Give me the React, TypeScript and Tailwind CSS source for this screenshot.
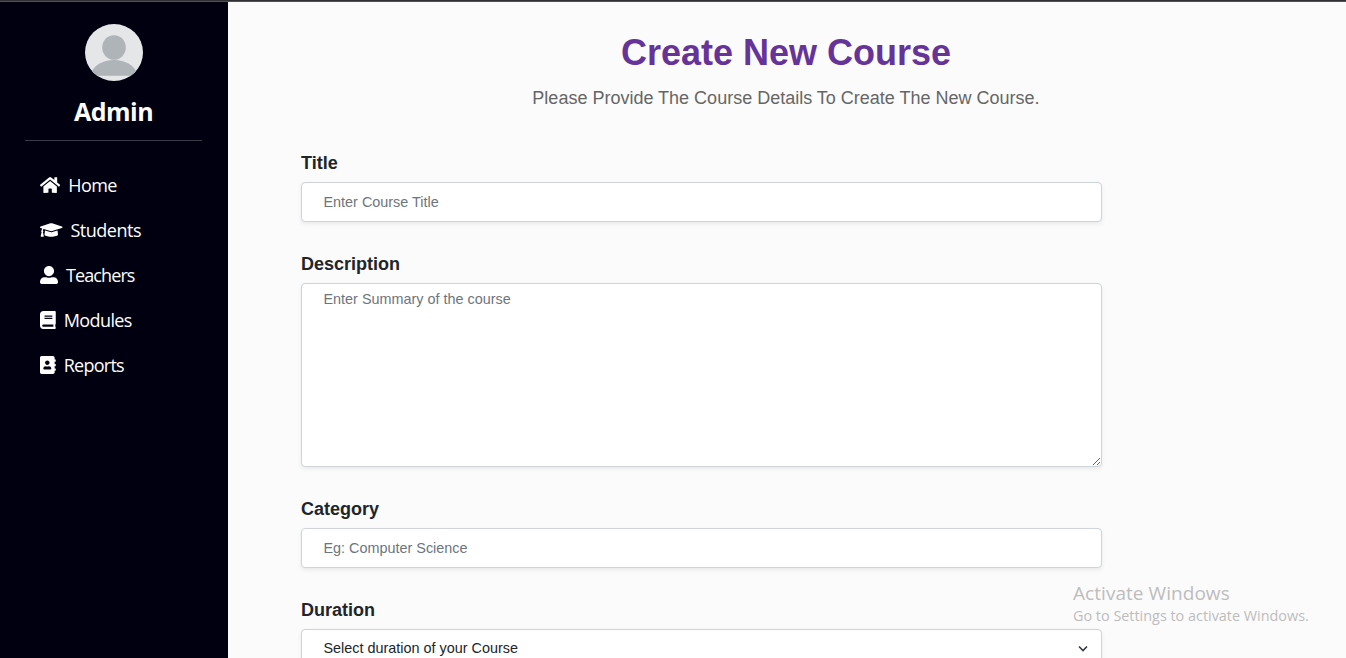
import type { ComponentType, ReactNode } from "react";
import { FaAddressBook, FaBook, FaGraduationCap, FaHome, FaUserAlt } from "react-icons/fa";

type NavItem = { label: string; icon: ComponentType<{ className?: string; preserveAspectRatio?: string }>; size: string; spacing: string };

const navItems: NavItem[] = [
  { label: "Home", icon: FaHome, size: "w-[20.25px]", spacing: "tracking-[-0.6px]" },
  { label: "Students", icon: FaGraduationCap, size: "w-[22.5px]", spacing: "tracking-[-0.5px]" },
  { label: "Teachers", icon: FaUserAlt, size: "w-[18px]", spacing: "tracking-[-0.9px]" },
  { label: "Modules", icon: FaBook, size: "w-[15.75px]", spacing: "tracking-[-0.6px]" },
  { label: "Reports", icon: FaAddressBook, size: "w-[15.75px]", spacing: "tracking-[-0.75px]" },
];

const control =
  "block w-full rounded-[4px] border border-[#ced4da] bg-white px-[21.5px] text-[14.4px] text-[#212529] shadow-[0_2px_4px_rgba(0,0,0,0.075)] outline-none placeholder:text-[#6c757d]";

function Avatar() {
  return (
    <svg className="h-[57px] w-[58px]" viewBox="0 0 58 57">
      <defs>
        <clipPath id="avatar">
          <ellipse cx="29" cy="28.5" rx="29" ry="28.5" />
        </clipPath>
      </defs>
      <g clipPath="url(#avatar)">
        <rect width="58" height="57" fill="#e4e6e8" />
        <ellipse cx="29" cy="23.5" rx="11.8" ry="12.3" fill="#aeb4b8" />
        <path d="M5 51.8C8 41 18 36 29 36s21 5 24 15.8z" fill="#aeb4b8" />
      </g>
    </svg>
  );
}

function Sidebar() {
  return (
    <aside className="flex w-[228px] shrink-0 flex-col bg-[#000011] font-['Open_Sans','Noto_Sans',sans-serif] text-white">
      <div className="mx-[25px] flex h-[139px] w-[177px] flex-col items-center border-b border-[#3b3b48] pt-[22px]">
        <Avatar />
        <h2 className="mt-[12px] text-[25px] leading-9 font-bold tracking-[-0.5px]">Admin</h2>
      </div>
      <nav className="mt-[21px] flex flex-col pl-10">
        {navItems.map(({ label, icon: Icon, size, spacing }) => (
          <a key={label} href="#" className="flex h-[45px] items-center gap-2">
            <Icon className={`h-[18px] shrink-0 ${size}`} />
            <span className={`text-[18px] leading-6 ${spacing}`}>{label}</span>
          </a>
        ))}
      </nav>
    </aside>
  );
}

function Field({ id, label, children }: { id: string; label: string; children: ReactNode }) {
  return (
    <div>
      <label htmlFor={id} className="mb-[5px] block text-[18px] leading-[27px] font-bold text-[#212529]">
        {label}
      </label>
      {children}
    </div>
  );
}

export default function App() {
  return (
    <div className="relative flex h-[658px] w-full flex-col overflow-hidden bg-[#fbfbfb]">
      <div className="h-[2px] shrink-0 border-b border-[#505055] bg-[#303034]" />
      <div className="flex min-h-0 flex-1">
        <Sidebar />
        <main className="flex-1 overflow-hidden font-['Liberation_Sans',Arial,sans-serif]">
          <header className="pt-[29px] pr-[2px] text-center">
            <h1 className="text-[36px] leading-[43px] font-bold text-[#663399]">Create New Course</h1>
            <p className="mt-[11px] text-[18px] leading-[27px] text-[#666666]">
              Please Provide The Course Details To Create The New Course.
            </p>
          </header>
          <form className="mt-[38px] ml-[73px] flex w-[801px] flex-col gap-[29px]">
            <Field id="title" label="Title">
              <input id="title" placeholder="Enter Course Title" className={`${control} h-10`} />
            </Field>
            <Field id="description" label="Description">
              <textarea
                id="description"
                placeholder="Enter Summary of the course"
                className={`${control} h-[184px] resize pt-[5px] leading-[21px]`}
              />
            </Field>
            <Field id="category" label="Category">
              <input id="category" placeholder="Eg: Computer Science" className={`${control} h-10`} />
            </Field>
            <Field id="duration" label="Duration">
              <div className="relative">
                <select id="duration" className={`${control} h-10 appearance-none`}>
                  <option>Select duration of your Course</option>
                </select>
                <svg
                  className="pointer-events-none absolute top-[16px] right-[14px] h-[8px] w-[10px]"
                  viewBox="0 0 10 8"
                  fill="none"
                  stroke="#343a40"
                  strokeWidth="1.6"
                >
                  <path d="M1 1.5l4 4 4-4" />
                </svg>
              </div>
            </Field>
          </form>
        </main>
      </div>
      <div className="pointer-events-none absolute top-[580px] left-[1073px] font-['Open_Sans','Noto_Sans',sans-serif] whitespace-nowrap text-[#bdbdbd]">
        <p className="text-[19px] leading-[26px] tracking-[0.05px]">Activate Windows</p>
        <p className="text-[14.4px] leading-5">Go to Settings to activate Windows.</p>
      </div>
    </div>
  );
}
